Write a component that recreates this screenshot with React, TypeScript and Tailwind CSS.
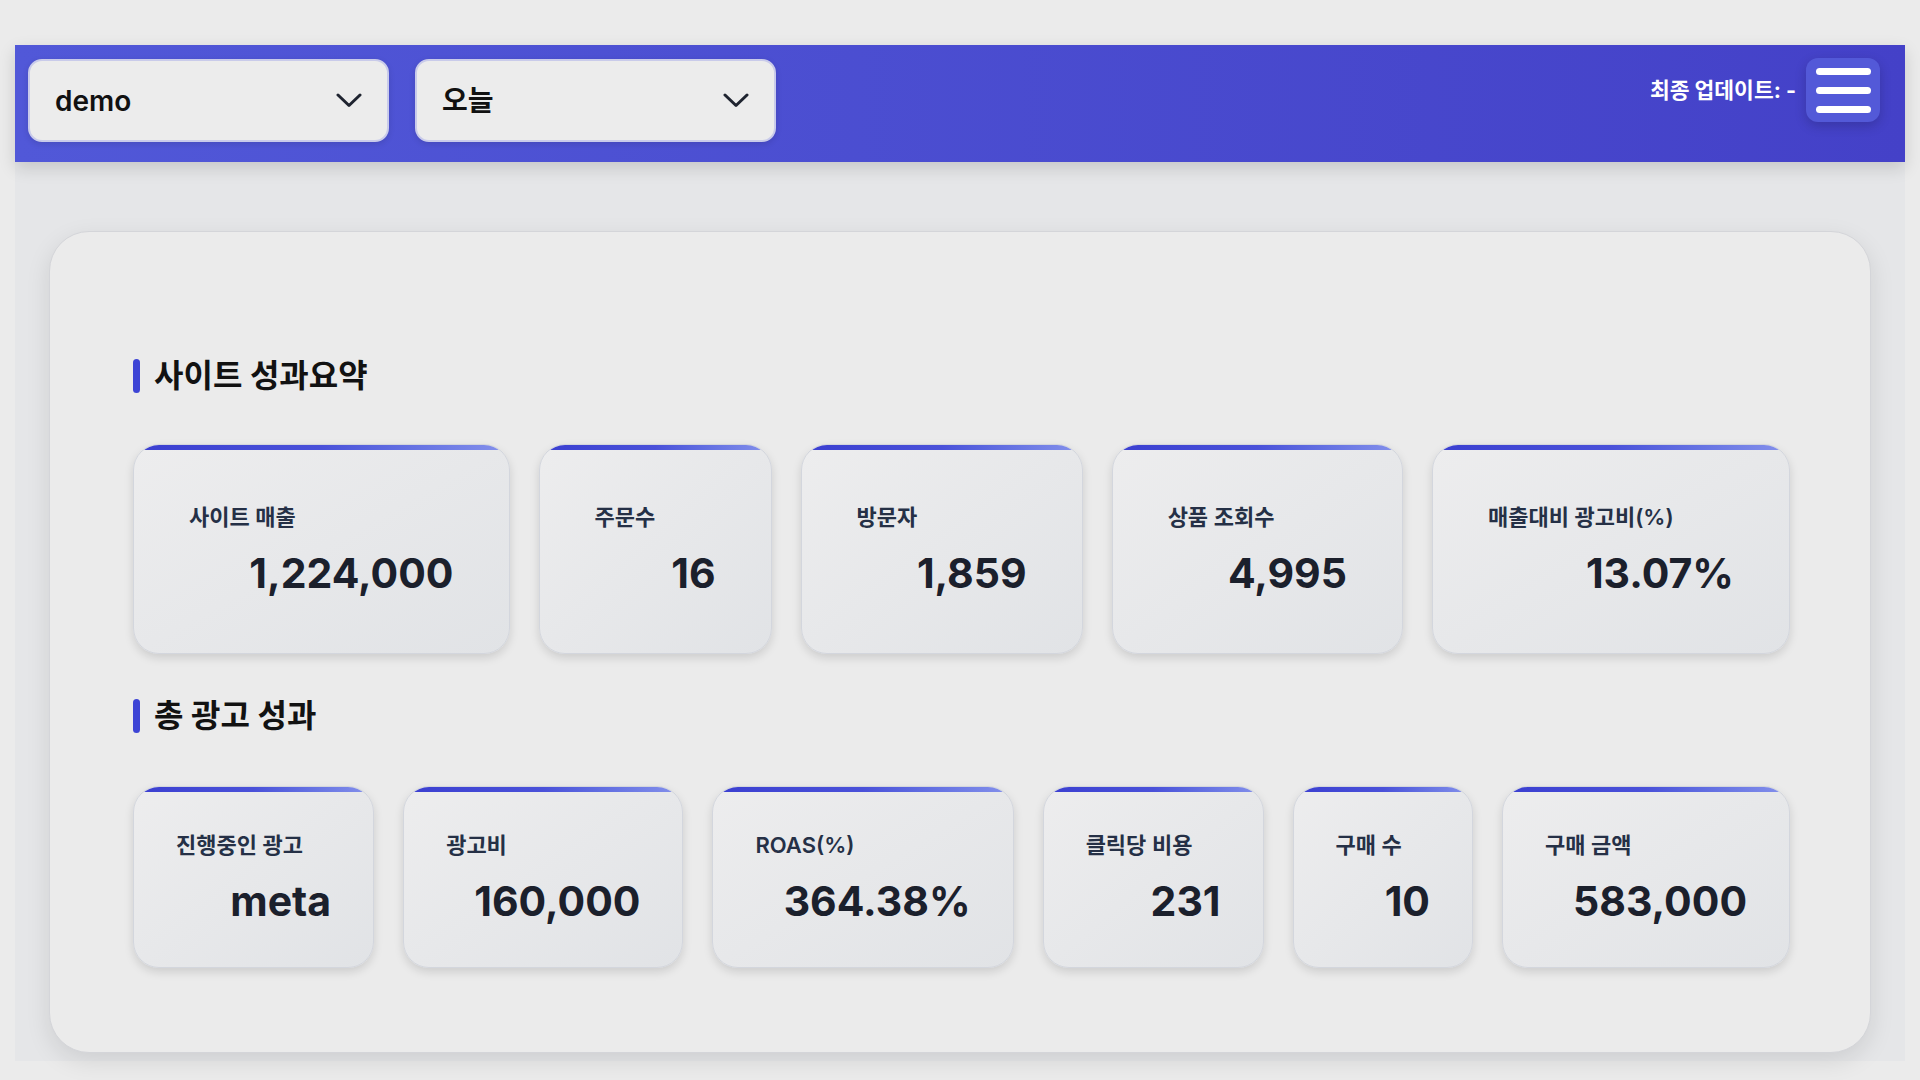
import React from 'react';

type Stat = {
  label: string;
  value: string;
};

const siteStats: Stat[] = [
  { label: '사이트 매출', value: '1,224,000' },
  { label: '주문수', value: '16' },
  { label: '방문자', value: '1,859' },
  { label: '상품 조회수', value: '4,995' },
  { label: '매출대비 광고비(%)', value: '13.07%' },
];

const adStats: Stat[] = [
  { label: '진행중인 광고', value: 'meta' },
  { label: '광고비', value: '160,000' },
  { label: 'ROAS(%)', value: '364.38%' },
  { label: '클릭당 비용', value: '231' },
  { label: '구매 수', value: '10' },
  { label: '구매 금액', value: '583,000' },
];

const FONT = { fontFamily: '"Inter", "Noto Sans CJK KR", sans-serif' };

function Chevron() {
  return (
    <svg width="26" height="15" viewBox="0 0 26 15" fill="none">
      <polyline
        points="2,2 13,12.5 24,2"
        stroke="#1f2430"
        strokeWidth="3"
        strokeLinecap="round"
        strokeLinejoin="round"
      />
    </svg>
  );
}

function Select({ value }: { value: string }) {
  return (
    <button className="flex h-[83px] w-[361px] items-center justify-between rounded-[14px] border-2 border-[#c9cbea] bg-[#ececec] pl-[25px] pr-[25px] shadow-[0_2px_6px_rgba(0,0,0,0.12)]">
      <span className="text-[28px] font-semibold text-[#111111]">{value}</span>
      <Chevron />
    </button>
  );
}

function SectionTitle({ title }: { title: string }) {
  return (
    <div className="flex h-[34px] items-center gap-[14px]">
      <div className="h-[34px] w-[7px] rounded-full bg-[#3d44d5]" />
      <h2 className="text-[32px] font-bold leading-none text-[#121212]">{title}</h2>
    </div>
  );
}

function StatCard({ stat, large }: { stat: Stat; large?: boolean }) {
  return (
    <div
      className={
        large
          ? 'relative flex-auto overflow-hidden rounded-[26px] border border-[#d3d6dd] bg-linear-to-br from-[#ededee] to-[#e1e3e6] px-[55px] pt-[58px] pb-[55px] shadow-[0_4px_10px_rgba(0,0,0,0.13)]'
          : 'relative flex-auto overflow-hidden rounded-[26px] border border-[#d3d6dd] bg-linear-to-br from-[#ededee] to-[#e1e3e6] px-[42px] pt-[44px] pb-[41px] shadow-[0_4px_10px_rgba(0,0,0,0.13)]'
      }
    >
      {/* top accent strip */}
      <div className="absolute inset-x-0 top-0 h-[5px] bg-linear-to-r from-[#3a3ed0] via-[#4a51d9] to-[#8591eb]" />
      <div className="whitespace-nowrap text-[22px] font-semibold leading-[28px] text-[#253046]">
        {stat.label}
      </div>
      <div className="mt-[17px] whitespace-nowrap text-right text-[41px] font-bold leading-[50px] text-[#1b202c]">
        {stat.value}
      </div>
    </div>
  );
}

export default function App() {
  return (
    <div className="min-h-screen bg-[#ebebeb] px-[15px] pt-[45px]" style={FONT}>
      <div className="flex flex-col bg-[#e5e6e8]">
        {/* Header */}
        <header className="relative z-10 flex h-[117px] items-start justify-between bg-linear-to-r from-[#5158d8] to-[#4441c8] pl-[13px] pr-[25px] pt-[14px] shadow-[0_6px_16px_rgba(0,0,0,0.14)]">
          <div className="flex gap-[26px]">
            <Select value="demo" />
            <Select value="오늘" />
          </div>
          <div className="-mt-[1px] flex items-center gap-[10px]">
            <span className="text-[21.5px] font-bold text-white">최종 업데이트: -</span>
            <button className="flex h-[64px] w-[74px] flex-col items-center justify-center gap-[12px] rounded-[12px] bg-[#5359d8] shadow-[0_4px_12px_rgba(0,0,0,0.18)]">
              <span className="h-[7px] w-[55px] rounded-full bg-white" />
              <span className="h-[7px] w-[55px] rounded-full bg-white" />
              <span className="h-[7px] w-[55px] rounded-full bg-white" />
            </button>
          </div>
        </header>

        {/* Main */}
        <div className="px-[34px] pt-[69px] pb-[8px]">
          <div className="rounded-[40px] border border-[#d4d5d9] bg-[#ebebeb] pl-[83px] pr-[80px] pt-[127px] pb-[84px] shadow-[0_8px_24px_rgba(0,0,0,0.1)]">
            <SectionTitle title="사이트 성과요약" />
            <div className="mt-[51px] flex gap-[29px]">
              {siteStats.map(s => (
                <StatCard key={s.label} stat={s} large />
              ))}
            </div>

            <div className="mt-[45px]">
              <SectionTitle title="총 광고 성과" />
            </div>
            <div className="mt-[53px] flex gap-[29px]">
              {adStats.map(s => (
                <StatCard key={s.label} stat={s} />
              ))}
            </div>
          </div>
        </div>
      </div>
    </div>
  );
}
